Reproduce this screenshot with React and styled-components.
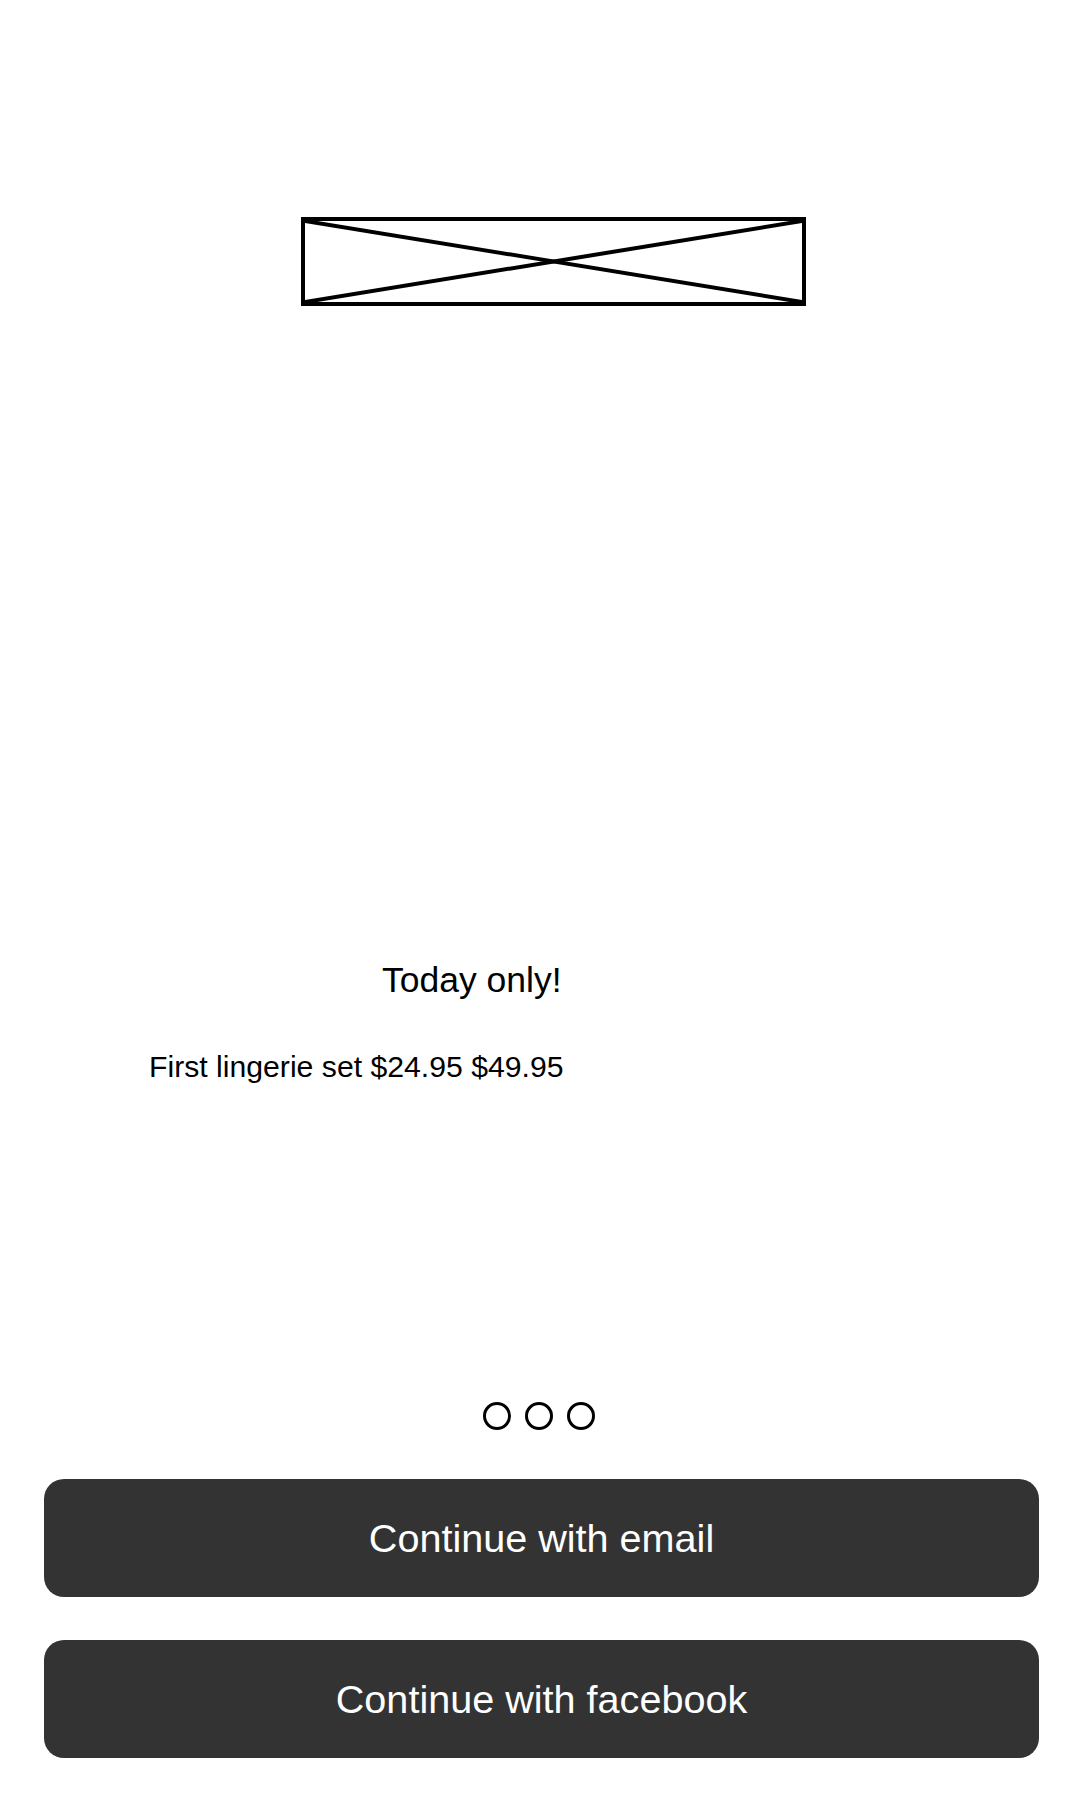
import React from 'react'
import styled, { createGlobalStyle } from 'styled-components'

const GlobalStyle = createGlobalStyle`
  html, body {
    margin: 0;
    padding: 0;
    background: #fff;
  }
  body {
    font-family: "Liberation Sans", Arial, sans-serif;
    color: #000;
  }
`

const Screen = styled.div`
  width: 1080px;
  height: 1800px;
  display: flex;
  flex-direction: column;
  background: #fff;
`

const LogoBox = styled.div`
  position: relative;
  margin: 217px 0 0 301px;
  width: 505px;
  height: 89px;
  box-sizing: border-box;
  border: 4px solid #000;

  svg {
    display: block;
    width: 100%;
    height: 100%;
  }
`

const Promo = styled.div`
  margin-top: 654px;
  display: flex;
  flex-direction: column;
  gap: 50px;
  padding-left: 149px;
`

const PromoTitle = styled.div`
  margin-left: 233px;
  font-size: 35.5px;
  line-height: 40px;
`

const PromoText = styled.div`
  font-size: 30.2px;
  line-height: 34px;
`

const Dots = styled.div`
  margin-top: 318px;
  display: flex;
  justify-content: center;
  gap: 14px;
  padding-right: 3px;
`

const Dot = styled.span`
  width: 28px;
  height: 28px;
  box-sizing: border-box;
  border: 3px solid #000;
  border-radius: 50%;
  background: ${p => (p.active ? '#000' : 'transparent')};
`

const Actions = styled.div`
  margin: 49px 41px 0 44px;
  display: flex;
  flex-direction: column;
  gap: 43px;
`

const ActionButton = styled.button`
  height: 118px;
  border: none;
  border-radius: 20px;
  background: #333333;
  color: #fff;
  font-family: "Liberation Sans", Arial, sans-serif;
  font-size: 39.6px;
  display: flex;
  align-items: center;
  justify-content: center;
  padding: 0;
  cursor: pointer;
`

function Placeholder () {
  return (
    <LogoBox>
      <svg viewBox='0 0 497 81' preserveAspectRatio='none'>
        <line x1='0' y1='0' x2='497' y2='81' stroke='#000' strokeWidth='4' />
        <line x1='0' y1='81' x2='497' y2='0' stroke='#000' strokeWidth='4' />
      </svg>
    </LogoBox>
  )
}

export default function App () {
  return (
    <>
      <GlobalStyle />
      <Screen>
        <Placeholder />
        <Promo>
          <PromoTitle>Today only!</PromoTitle>
          <PromoText>First lingerie set $24.95 $49.95</PromoText>
        </Promo>
        <Dots>
          <Dot />
          <Dot />
          <Dot />
        </Dots>
        <Actions>
          <ActionButton>Continue with email</ActionButton>
          <ActionButton>Continue with facebook</ActionButton>
        </Actions>
      </Screen>
    </>
  )
}
